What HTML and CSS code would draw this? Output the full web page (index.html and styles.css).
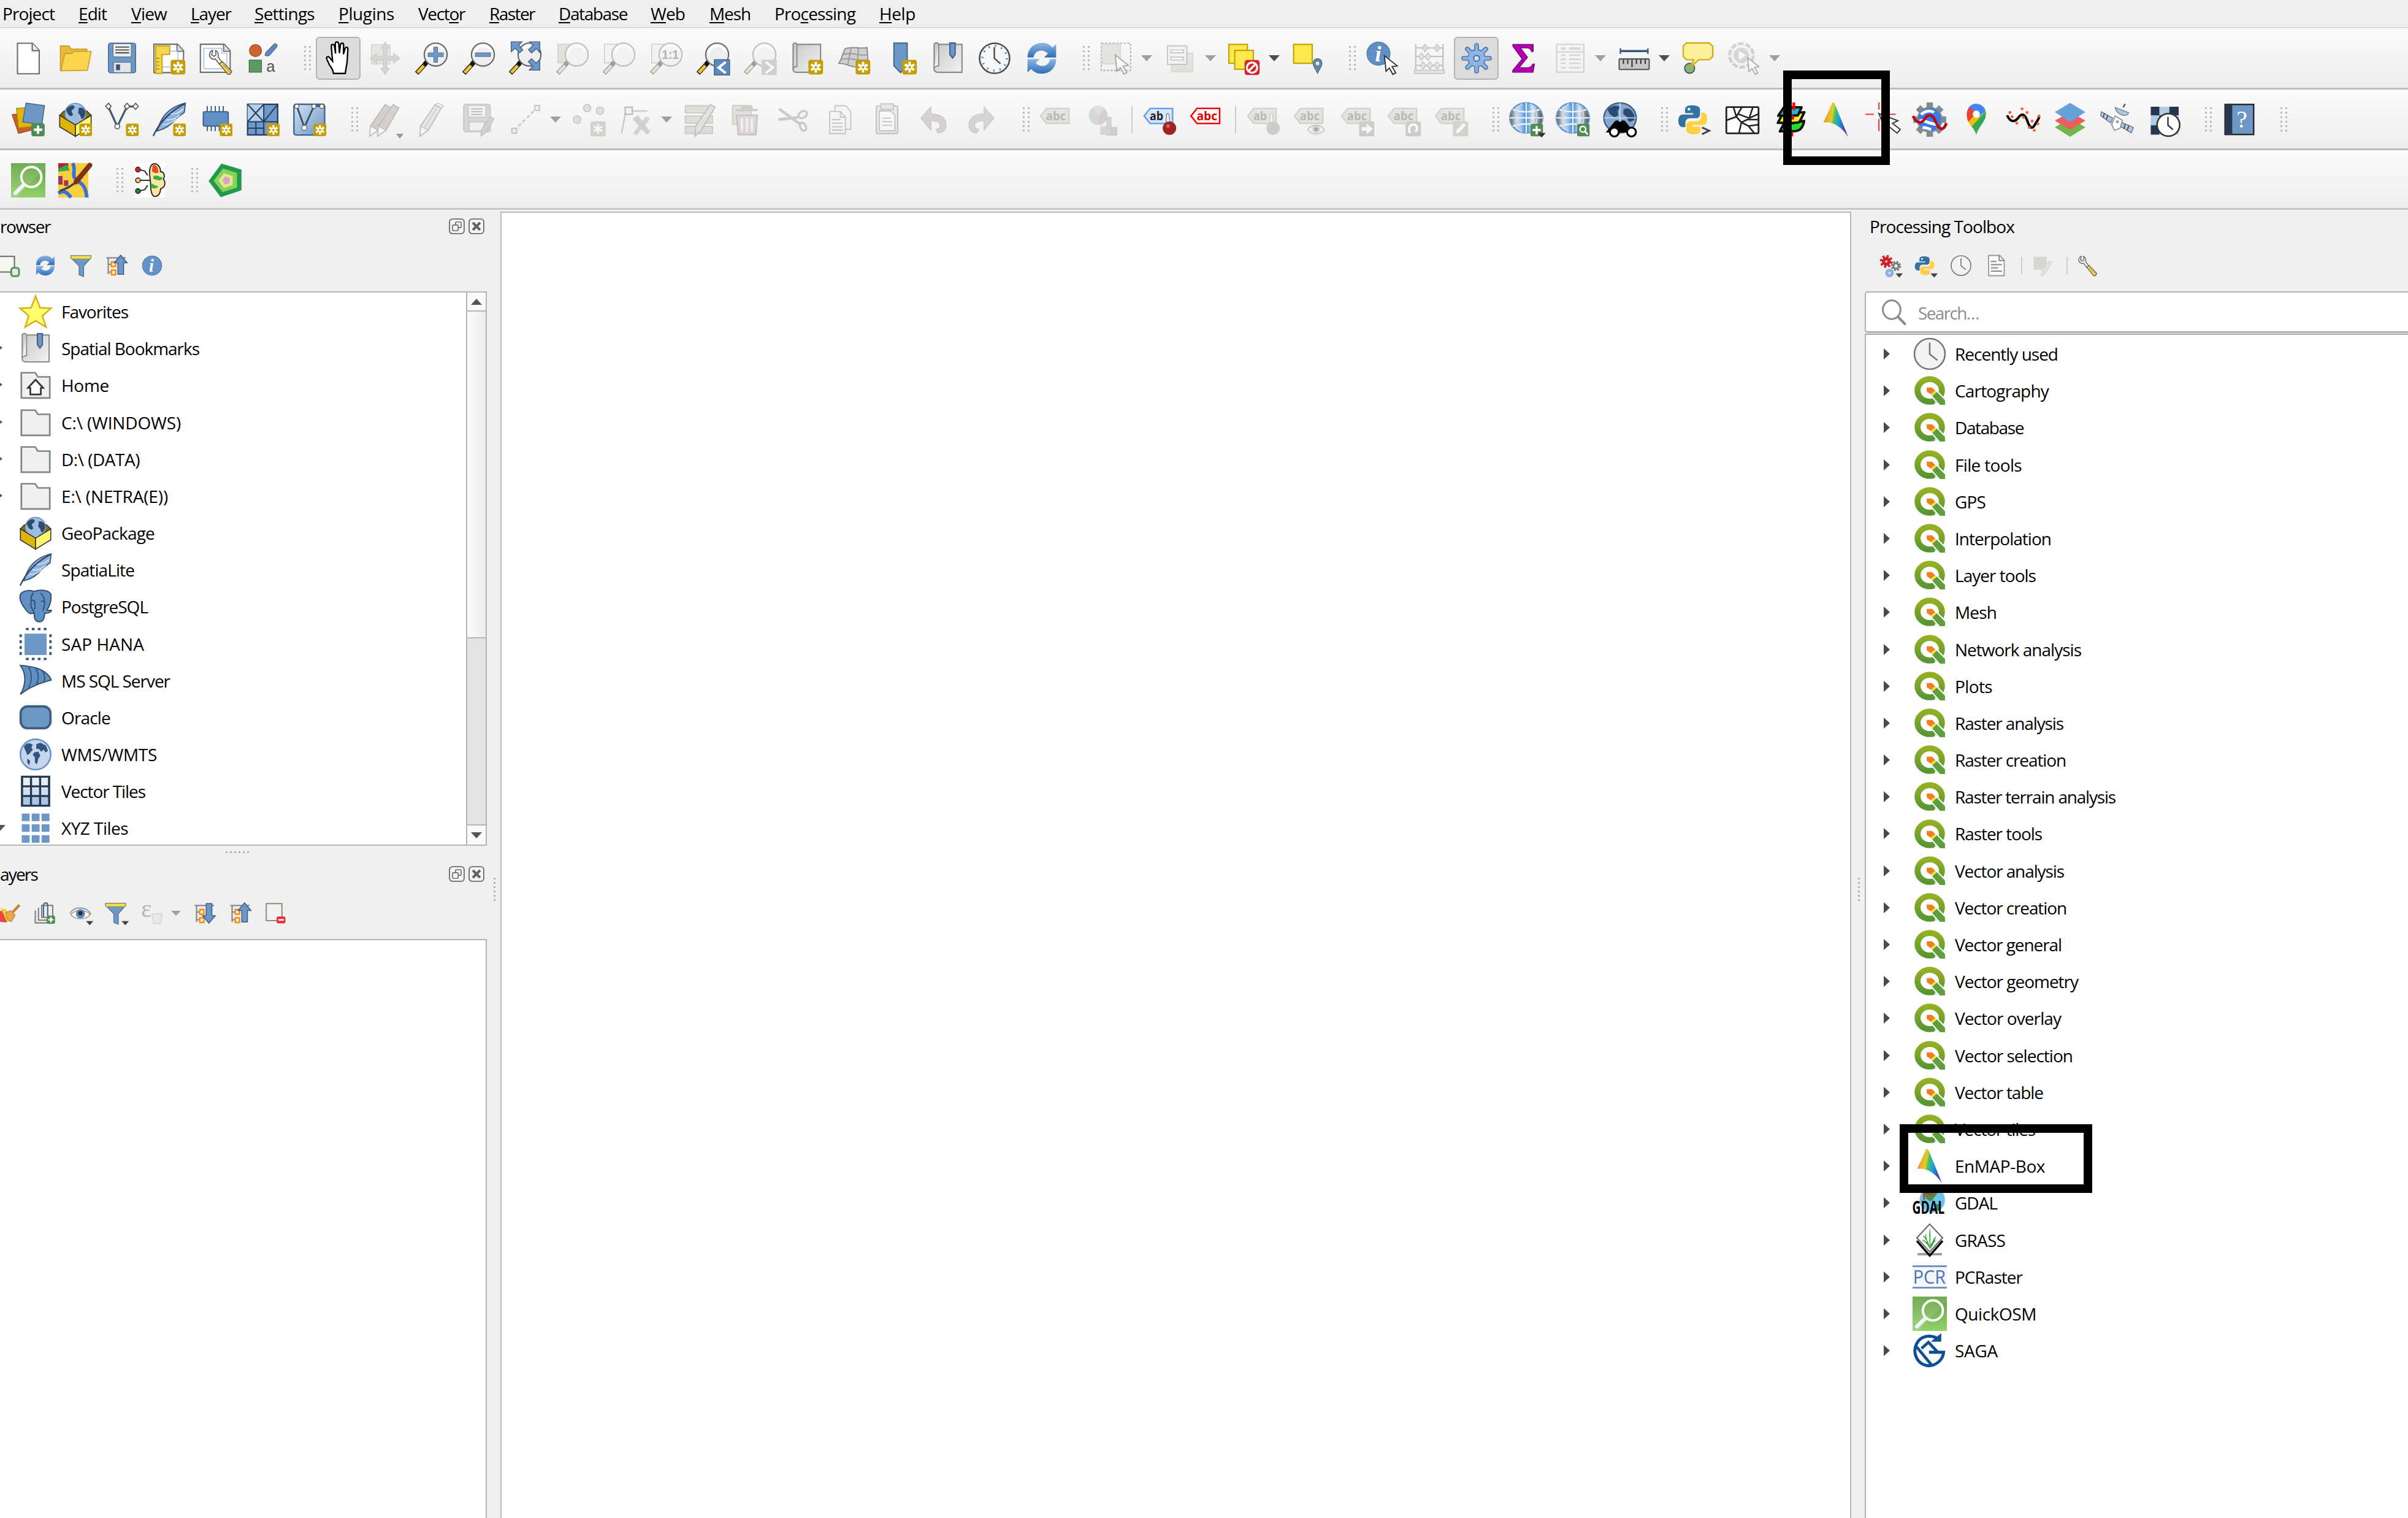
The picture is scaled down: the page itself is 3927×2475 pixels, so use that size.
FILE: index.html
```html
<!DOCTYPE html>
<html lang="en">
<head>
<meta charset="utf-8">
<title>QGIS</title>
<link rel="stylesheet" href="styles.css">
</head>
<body>
<svg class="defs" width="0" height="0" aria-hidden="true">
<defs>
<linearGradient id="gSteel" x1="0" y1="0" x2="1" y2="1"><stop offset="0" stop-color="#d5e3f2"/><stop offset="1" stop-color="#6a93c4"/></linearGradient>
<linearGradient id="gPage" x1="0" y1="0" x2="1" y2="1"><stop offset="0" stop-color="#c9c9c9"/><stop offset="1" stop-color="#f2f2f2"/></linearGradient>
<linearGradient id="gRefresh" x1="0" y1="0" x2="0" y2="1"><stop offset="0" stop-color="#8fb8e6"/><stop offset="1" stop-color="#2f6db5"/></linearGradient>
<linearGradient id="gOsm" x1="0" y1="0" x2="0" y2="1"><stop offset="0" stop-color="#5f9f3e"/><stop offset="1" stop-color="#93d26a"/></linearGradient>
<linearGradient id="gRain" x1="0" y1="0" x2="1" y2=".25"><stop offset="0" stop-color="#ee4030"/><stop offset=".25" stop-color="#f7a823"/><stop offset=".42" stop-color="#d4d22c"/><stop offset=".52" stop-color="#52bd5c"/><stop offset=".7" stop-color="#18a5d8"/><stop offset="1" stop-color="#4a3fae"/></linearGradient>
<linearGradient id="gQ" x1="0" y1="0" x2="0" y2="1"><stop offset="0" stop-color="#93b023"/><stop offset="1" stop-color="#589632"/></linearGradient>
<linearGradient id="gGlobe" x1="0" y1="0" x2="1" y2="0"><stop offset="0" stop-color="#555"/><stop offset=".2" stop-color="#ddd"/><stop offset=".35" stop-color="#9cc4ee"/><stop offset=".5" stop-color="#3d87d0"/><stop offset=".7" stop-color="#e3e8ee"/><stop offset="1" stop-color="#444"/></linearGradient>

<symbol id="badge" viewBox="0 0 12 12"><rect x=".3" y=".3" width="11.2" height="11.2" rx="1.8" fill="#c49f04"/><path d="M6 1.8v8.2M2.4 3.9l7.1 4.1M9.5 3.9L2.4 8" stroke="#fff" stroke-width="1.8"/><circle cx="6" cy="6" r="1" fill="#c49f04"/></symbol>
<symbol id="new" viewBox="0 0 24 24"><path d="M4.500 1.500h10.500l4.700 5v16.300h-15.200z" fill="#fff" stroke="#6d6d6d" stroke-width=".9"/><path d="M14.800 1.500v5.200h4.900" fill="#eee" stroke="#6d6d6d" stroke-width=".9"/></symbol>
<symbol id="open" viewBox="0 0 24 24"><path d="M1.500 20.500V3.400h6l1.500 2.200h11v4" fill="#e9bb3a" stroke="#c79c29" stroke-width=".7"/><path d="M1.800 20.800L4.500 8.600h5l1.300-1.400h12.200l-2.600 13.200z" fill="#fcd54f" stroke="#c79c29" stroke-width=".7"/></symbol>
<symbol id="save" viewBox="0 0 24 24"><rect x="2.500" y="1.400" width="19" height="20.800" rx="1.600" fill="#6d97c4" stroke="#4d6f97" stroke-width=".7"/><rect x="5.700" y="1.800" width="12.800" height="9.300" rx=".8" fill="#ececec" stroke="#4d6f97" stroke-width=".5"/><path d="M7.300 4.200h9.700M7.300 6.200h9.700M7.300 8.200h9.700" stroke="#333" stroke-width=".7"/><rect x="6" y="14.800" width="12.400" height="7.200" fill="#e4e4e4" stroke="#4d6f97" stroke-width=".5"/><rect x="7.800" y="16.300" width="2.800" height="4" fill="#34557d"/></symbol>
<symbol id="layout" viewBox="0 0 24 24"><path d="M1.300 2.200h16.500l4.200 4.500v15.300h-20.700z" fill="#fff" stroke="#6d6d6d" stroke-width=".9"/><path d="M17.400 2.200v4.900h4.600" fill="#ddd" stroke="#6d6d6d" stroke-width=".8"/><rect x="6" y="7" width="12" height="11" fill="none" stroke="#9cb8e6" stroke-width=".6"/><path d="M2.500 3.400h9.800v6h-5.300v13.200h-4.500z" fill="#f6d44c" stroke="#c79f12" stroke-width=".8"/><path d="M3 12h2M3 14.500h2M3 17h2M3 19.500h2" stroke="#a27f00" stroke-width=".6"/><use href="#badge" x="12.700" y="12.800" width="11" height="11"/></symbol>
<symbol id="wrenchShape" viewBox="0 0 24 24"><path d="M5.500 1.800c-2.700 1-3.800 4-2.300 6.100 1.300 1.800 3.300 2 4.600 1.600l3.700 4.800 2.300-1.900-3.600-4.700c.8-2.400-.3-4.900-2.300-5.800l.4 3.900-1.800 1.300-1.900-1.300z" fill="#eee" stroke="#555" stroke-width=".8"/><path d="M11.300 13.800l2.700-2 8.300 8.700-1.500 2.400-1.900.2z" fill="#f0d26c" stroke="#6b5a25" stroke-width=".8"/><path d="M14.500 14.500l6.500 7" stroke="#b99a37" stroke-width=".7"/></symbol>
<symbol id="layoutmgr" viewBox="0 0 24 24"><path d="M1.200 2.200h16.600l4.200 4.500v15.100h-20.800z" fill="#fff" stroke="#6d6d6d" stroke-width=".9"/><path d="M17.400 2.200v4.900h4.600" fill="#ddd" stroke="#6d6d6d" stroke-width=".8"/><path d="M3.600 5h12.500v3.500h3.600v10.800H3.600z" fill="none" stroke="#9cb8f0" stroke-width=".6"/><use href="#wrenchShape" x="5.500" y="5" width="19" height="19"/></symbol>
<symbol id="style" viewBox="0 0 24 24"><circle cx="6.700" cy="6.600" r="4.200" fill="#cc6433" stroke="#a04a22" stroke-width=".6"/><path d="M13.400 10c.2-2 1-3 2.200-3.600l4.400-4.600 1.800.6-.2 1.700-4.200 4.700c-.7 1.300-2 2-4 1.200z" fill="#6188b8" stroke="#43658f" stroke-width=".5"/><rect x="2.300" y="13.300" width="8.600" height="8.400" fill="#5c9a63" stroke="#3f7646" stroke-width=".6"/><text x="14.200" y="21.600" font-family="Liberation Sans" font-size="11" fill="#555">a</text></symbol>
<symbol id="hand" viewBox="0 0 24 24"><path d="M8.900 22.600c-.2-2.200-1.400-4.200-2.700-5.800l-2-4.300c-.5-1.600 1.200-2.100 2.100-.8l2 2.300-.6-6.600-.3-3.800c0-1.800 1.900-1.700 2.200-.1l.8 5.200-.2-6.700c.1-1.900 2.200-1.800 2.400 0l.5 6.400.7-5.800c.3-1.600 2.300-1.500 2.200.2l-.1 6.400 1.100-4c.5-1.400 2.100-1.100 2 .4l-.5 8.400c-.2 3-1 5-1.300 8.600z" fill="#fff" stroke="#000" stroke-width="1"/></symbol>
<symbol id="pansel" viewBox="0 0 24 24"><rect x="2.500" y="2.500" width="13" height="13.500" fill="#d8cf9c" stroke="#a89c60" stroke-width=".6"/><path d="M12 .8l3 4.200h-1.800v5.500H18V8.600L22.600 12 18 15.400v-2H13.200V19H15l-3 4.300L9 19h1.800v-5.600H6.200v2L1.500 12l4.700-3.400v1.900h4.600V5H9z" fill="#9aa6b3" stroke="#7c8996" stroke-width=".5"/></symbol>
<symbol id="mag" viewBox="0 0 24 24"><path d="M8.200 15.200L1.500 22.500" stroke="#222" stroke-width="3.200"/><path d="M6.500 17.200L2 22" stroke="#f6c52f" stroke-width="2.100"/><path d="M7 16.200l3-3.300" stroke="#111" stroke-width="3"/><circle cx="14.800" cy="9.400" r="8" fill="#eee" stroke="#666" stroke-width=".9"/><path d="M9 9a6 6 0 0 1 11.500-2" fill="none" stroke="#fff" stroke-width="1.500"/></symbol>
<symbol id="zin" viewBox="0 0 24 24"><use href="#mag"/><path d="M14.800 4v11M9.300 9.500h11" stroke="#40699a" stroke-width="3"/><path d="M14.800 4.400v10.200M9.700 9.500h10.200" stroke="#6d97c4" stroke-width="2.200"/></symbol>
<symbol id="zout" viewBox="0 0 24 24"><use href="#mag"/><path d="M9.300 9.500h11" stroke="#40699a" stroke-width="3"/><path d="M9.700 9.500h10.200" stroke="#6d97c4" stroke-width="2.200"/></symbol>
<symbol id="zfull" viewBox="0 0 24 24"><use href="#mag"/><g fill="#6d97c4" stroke="#40628e" stroke-width=".6"><path d="M2 .5h7.500L7.200 3l3 3.200-2.200 2L4.700 5 2 7.500z"/><path d="M22 .5v7.500L19.500 5.300l-3.200 3-2.200-2.200L17.300 3 14.800.5z"/><path d="M22 20.300v-7.500l-2.600 2.600-3.200-3.100-2.200 2.200 3.200 3.200-2.600 2.600z"/></g></symbol>
<symbol id="zsel" viewBox="0 0 24 24"><rect x="1.600" y="2.200" width="11" height="13" fill="#c9c08c" stroke="#999065" stroke-width=".6"/><use href="#mag"/></symbol>
<symbol id="zlay" viewBox="0 0 24 24"><rect x="1.600" y="2.200" width="11" height="13" fill="#eee" stroke="#888" stroke-width=".6"/><use href="#mag"/></symbol>
<symbol id="z11" viewBox="0 0 24 24"><rect x="1.600" y="2.200" width="11" height="13" fill="#eee" stroke="#888" stroke-width=".6"/><use href="#mag"/><text x="8.700" y="12.600" font-family="Liberation Sans" font-weight="bold" font-size="8.500" textLength="12" fill="#444">1:1</text></symbol>
<symbol id="zlast" viewBox="0 0 24 24"><use href="#mag"/><rect x="12.800" y="13" width="10.700" height="10.700" fill="#5d89bb" stroke="#3d618f" stroke-width=".6"/><path d="M20.800 14.600l-4.900 3.900 4.900 3.900" fill="none" stroke="#fff" stroke-width="1.700"/></symbol>
<symbol id="znext" viewBox="0 0 24 24"><use href="#mag"/><rect x="12.800" y="13" width="10.700" height="10.700" fill="#8f9aa6"/><path d="M15.800 14.600l4.900 3.900-4.900 3.900" fill="none" stroke="#fff" stroke-width="1.700"/></symbol>
<symbol id="mapnew" viewBox="0 0 24 24"><path d="M5 2.300h16.500v19.500H4.500c-1.500 0-2.200-1-2.200-2.500V2.500c0-1.500 2.700-1.500 2.700 0z" fill="url(#gPage)" stroke="#8a8a8a" stroke-width=".9"/><path d="M5 2.300v15.500c-1.300-.2-2.700.7-2.700 1.800" fill="none" stroke="#8a8a8a" stroke-width=".8"/><use href="#badge" x="12.700" y="12.800" width="11" height="11"/></symbol>
<symbol id="map3d" viewBox="0 0 24 24"><path d="M5.500 5.500c5-2.500 10 .5 15.500-1l.8 13-8.500.5c-4 0-7-2.500-12-2.500 2-3 2.500-6.500 4.200-10z" fill="#d0d0d0" stroke="#8a8a8a" stroke-width=".8"/><path d="M10 4.400L7.500 16.200M15 5l-1 13M3.800 9.500c7-2.500 11 1.500 17.500 0M2.700 13c7-2.300 12 1.600 19.300 0" fill="none" stroke="#999" stroke-width=".8"/><use href="#badge" x="12.700" y="12.800" width="11" height="11"/></symbol>
<symbol id="bmnew" viewBox="0 0 24 24"><path d="M7.200 1.400h9.300v15.900l-4.700 4.700-4.600-4.700z" fill="#6d97c4" stroke="#3d618f" stroke-width=".8"/><use href="#badge" x="12.700" y="12.800" width="11" height="11"/></symbol>
<symbol id="book" viewBox="0 0 24 24"><path d="M5.500 2.300h16.300v19.500H5c-1.800 0-2.700-1-2.700-2.500V2.500c0-1.700 3.200-1.700 3.200 0z" fill="url(#gPage)" stroke="#8a8a8a" stroke-width=".9"/><path d="M5.500 2.300v15c-1.500 0-3.200.7-3.200 1.800" fill="#eee" stroke="#8a8a8a" stroke-width=".8"/><path d="M13.300 1.300h3.700v8l-1.800 2.600-1.900-2.600z" fill="#6d97c4" stroke="#3a5b86" stroke-width=".8"/></symbol>
<symbol id="clock" viewBox="0 0 24 24"><circle cx="12" cy="12" r="10.500" fill="#f6f7f8" stroke="#4d4d4d" stroke-width="1.100"/><circle cx="12" cy="12" r="8.600" fill="none" stroke="#4e7fbd" stroke-width="1.500" stroke-dasharray=".9 3.600"/><path d="M11.800 4.300V12l4.300 3.800" fill="none" stroke="#555" stroke-width="1.100"/></symbol>
<symbol id="clock2" viewBox="0 0 24 24"><circle cx="12" cy="12" r="10.700" fill="#f1f4f3" stroke="#777" stroke-width="1.100"/><path d="M12 4.200v8l5.300 4.200" fill="none" stroke="#777" stroke-width="1.100"/></symbol>
<symbol id="refresh" viewBox="0 0 24 24"><path d="M2 11.500C2 4 8 .8 13 1.300c3 .2 5 1.600 6.500 3.200L22 2v9.500h-8.500l2.800-2.800C13 5.200 7 6 6.200 11.500z" fill="url(#gRefresh)"/><path d="M22 12.500c0 7.500-6 10.700-11 10.200-3-.2-5-1.600-6.500-3.200L2 22v-9.500h8.500l-2.800 2.800c3.300 3.500 9.300 2.700 10.100-2.800z" fill="url(#gRefresh)"/></symbol>
<symbol id="cursor" viewBox="0 0 12 16"><path d="M.7.700l1.200 12 2.600-2.500 2.700 4.900 2.200-1.300-2.800-4.700 3.900-.6z" fill="#fff" stroke="#333" stroke-width=".9"/></symbol>
<symbol id="selrect" viewBox="0 0 24 24"><rect x="1.300" y="1.500" width="20.500" height="19" fill="none" stroke="#555" stroke-width=".9" stroke-dasharray="1.600 1"/><rect x="1.700" y="2" width="13" height="14" fill="#cfc8a4" stroke="#aaa27a" stroke-width=".6"/><use href="#cursor" x="9.500" y="9" width="13" height="15"/></symbol>
<symbol id="selform" viewBox="0 0 24 24"><rect x="5.800" y="8.500" width="15" height="13" fill="#cfc8a4" stroke="#aaa27a" stroke-width=".6"/><rect x="3" y="3.300" width="13.500" height="13" fill="#eee" stroke="#777" stroke-width=".8"/><path d="M5.300 6.200h8.800v2H5.300zM5.300 11.200h8.800v2H5.300z" fill="#fff" stroke="#777" stroke-width=".7"/></symbol>
<symbol id="desel" viewBox="0 0 24 24"><rect x="1.300" y="2.300" width="13" height="13.200" fill="#fce94f" stroke="#c4a000" stroke-width=".9"/><rect x="5.400" y="6.500" width="13" height="13.200" fill="#fce94f" stroke="#c4a000" stroke-width=".9"/><rect x="12.300" y="13.200" width="10.500" height="10.500" rx="1.800" fill="#d7232b"/><circle cx="17.500" cy="18.500" r="3.600" fill="none" stroke="#fff" stroke-width="1.400"/><path d="M15 21l5-5" stroke="#fff" stroke-width="1.400"/></symbol>
<symbol id="selloc" viewBox="0 0 24 24"><rect x="2" y="2.300" width="13" height="13.200" fill="#fce94f" stroke="#c4a000" stroke-width=".9"/><path d="M18.700 12.300a3.100 3.100 0 0 1 3.100 3.300c0 2.200-1.900 4-3.100 7-1.200-3-3.100-4.800-3.100-7a3.100 3.100 0 0 1 3.100-3.300z" fill="#6189a0" stroke="#45677b" stroke-width=".5"/><circle cx="18.700" cy="15.600" r="1.200" fill="#eef"/></symbol>
<symbol id="ident" viewBox="0 0 24 24"><circle cx="9" cy="8.800" r="8.100" fill="#5f8fc5" stroke="#4a74a5" stroke-width=".5"/><text x="6.600" y="14.300" font-family="Liberation Serif" font-style="italic" font-weight="bold" font-size="15.500" fill="#fff">i</text><use href="#cursor" x="11.500" y="9.600" width="13" height="14.500"/></symbol>
<symbol id="abacus" viewBox="0 0 24 24"><path d="M2.500 2v20M21.500 2v20M2.500 4.800h19M2.500 10.800h19M2.500 17h19" fill="none" stroke="#777" stroke-width="1"/><path d="M1.500 20.300h21v2.300h-21z" fill="#ccc" stroke="#777" stroke-width=".6"/><g stroke="#777" stroke-width=".6"><path d="M9 2.200l2 2.600-2 2.600-2-2.600zM17.400 2.200l2 2.600-2 2.600-2-2.600z" fill="#d8a8a0"/><path d="M6.500 8.200l2 2.600-2 2.600-2-2.600zM11 8.200l2 2.600-2 2.600-2-2.600z" fill="#b6d0a8"/><path d="M7.600 14.400l2 2.600-2 2.600-2-2.600zM12.500 14.400l2 2.600-2 2.600-2-2.600zM17.400 14.400l2 2.600-2 2.600-2-2.600z" fill="#ccd"/></g></symbol>
<symbol id="gear" viewBox="0 0 24 24"><g stroke="#4b76ac" stroke-width="3.300" stroke-linecap="round"><path d="M12 3v18M3 12h18M5.600 5.600l12.800 12.800M18.400 5.600L5.600 18.400"/></g><circle cx="12" cy="12" r="6.400" fill="#4b76ac"/><g stroke="#8fb3e2" stroke-width="1.900" stroke-linecap="round"><path d="M12 3v18M3 12h18M5.600 5.600l12.800 12.800M18.400 5.600L5.600 18.400"/></g><circle cx="12" cy="12" r="5.700" fill="#8fb3e2"/><circle cx="12" cy="12" r="2" fill="#dfe4ea" stroke="#4b76ac" stroke-width=".9"/></symbol>
<symbol id="sigma" viewBox="0 0 24 24"><path d="M4.800 2.300H19v5h-1.200c-.4-2-1.400-2.600-3.300-2.600H10l5 6.700-5.800 7.200h6c2.200 0 3-1 3.500-2.600h1.200l-1 5.800H4.700v-1.200l6.600-8.100-6.500-9z" fill="#b000b0" stroke="#7d007d" stroke-width=".6"/></symbol>
<symbol id="table" viewBox="0 0 24 24"><rect x="2.400" y="2.300" width="19" height="19.400" fill="#f3f5f6" stroke="#8f9ba5" stroke-width=".9"/><path d="M2.400 7.600h19" stroke="#8f9ba5" stroke-width=".8"/><path d="M5.200 5.200h3.500M11 5.200h8" stroke="#9aa8b4" stroke-width="1.900"/><path d="M5.200 9.800h3.500M11 9.800h8M5.200 12.700h3.500M11 12.700h8M5.200 15.500h3.500M11 15.500h8M5.200 18.500h3.500M11 18.500h8" stroke="#9aa8b4" stroke-width="1.100"/></symbol>
<symbol id="ruler" viewBox="0 0 24 24"><path d="M2.400 7h19.200" stroke="#38587f" stroke-width="1.500"/><path d="M2.400 5v4M21.600 5v4" stroke="#38587f" stroke-width="1"/><rect x="1.500" y="12.500" width="21" height="7.300" rx=".5" fill="#c8c8c8" stroke="#555" stroke-width=".9"/><path d="M4.500 13v3M7.500 13v3M10.500 13v5.200M13.600 13v3M16.700 13v3M19.700 13v3" stroke="#333" stroke-width=".9"/></symbol>
<symbol id="tip" viewBox="0 0 24 24"><circle cx="6.200" cy="19" r="3.500" fill="#84b388" stroke="#3c5f40" stroke-width=".8"/><path d="M4 1.300h16l2.400 2.300v7L20 13h-7.500l-6 5.800 2.600-5.800H4l-2.300-2.400v-7z" fill="#faf09a" stroke="#d0ab1c" stroke-width="1"/></symbol>
<symbol id="action" viewBox="0 0 24 24"><circle cx="9.800" cy="10" r="8.300" fill="#eee" stroke="#999" stroke-width="2" stroke-dasharray="4 1.200"/><circle cx="9.800" cy="10" r="5.400" fill="#9fa8b0"/><path d="M8 6.800l5.200 3.200L8 13.200z" fill="#fff"/><use href="#cursor" x="12.500" y="11" width="12" height="13"/></symbol>

<symbol id="dsm" viewBox="0 0 24 24"><path d="M.8 8.600l13-1.500 1.500 12-10 2.500z" fill="#cd5f2c" stroke="#a34619" stroke-width=".6"/><path d="M3.800 4.200l14-1 .4 13.300-13 1.400z" fill="#e2b50c" stroke="#ad8500" stroke-width=".6"/><path d="M10.500.5L23.400 2.200 21.500 15.800 8.200 13.500z" fill="#6d97c4" stroke="#466c99" stroke-width=".7"/><rect x="14.200" y="14.500" width="9.300" height="9.200" rx="1.700" fill="#4f8b54"/><path d="M18.850 16.200v5.800M16 19.100h5.800" stroke="#fff" stroke-width="1.700"/></symbol>
<symbol id="gpkg" viewBox="0 0 24 24"><path d="M1 9l3-3h16l3 3-11 5.800z" fill="#8a6f06" stroke="#333" stroke-width=".6"/><circle cx="12" cy="8" r="7.400" fill="#9cbce0" stroke="#5f86b4" stroke-width=".6"/><path d="M5.500 5c2-3 5-3.500 5.500-2.500s1 1-1 2.500 1 2.500 0 4-3.500 0-4.500-4zM14 4c2-1 4 0 4.700 2s-.4 5-1.700 5.500-1-2.500-2.500-3.500.5-2.500-.5-4z" fill="#2e4a70"/><path d="M1 9l11 6.700v8L1 17z" fill="#dfb409" stroke="#333" stroke-width=".7"/><path d="M23 9l-11 6.700v8L23 17z" fill="#fdf76b" stroke="#333" stroke-width=".7"/></symbol>
<symbol id="gpkgnew" viewBox="0 0 24 24"><use href="#gpkg"/><use href="#badge" x="14.500" y="14.500" width="9.500" height="9.500"/></symbol>
<symbol id="shp" viewBox="0 0 24 24"><path d="M2.500 3.200L8.700 16.800 15.500 2.800h6" fill="none" stroke="#3e5a7a" stroke-width="1.400"/><g fill="#fff" stroke="#555" stroke-width=".7"><path d="M2.500.6l1.900 2.100-1.900 2.100L.6 2.700zM15.500.6l1.900 2.100-1.900 2.100-1.900-2.100zM21.500.6l1.900 2.100-1.900 2.100-1.900-2.100z"/><circle cx="8.700" cy="16.800" r="1.700"/></g></symbol>
<symbol id="shpnew" viewBox="0 0 24 24"><use href="#shp"/><use href="#badge" x="14.500" y="14.500" width="9.500" height="9.500"/></symbol>
<symbol id="feather" viewBox="0 0 24 24"><path d="M23.300.5C17 2 12 4.500 8 10c-2.500 3.500-3.300 6.500-4.500 10 4-1 9.500-3.500 13-8.500l6-4.500z" fill="#8fb2dc" stroke="#38587f" stroke-width=".8"/><path d="M23 .8C14 5.500 6 12 .8 23.500" fill="none" stroke="#2c4766" stroke-width="1"/><path d="M7.500 15.500c4 0 7-1.500 9-4M9.500 12.200c4 .3 7-.7 10-3.500M13 8c4 .2 6-1 9-3.500" fill="none" stroke="#dbe8f6" stroke-width=".7"/></symbol>
<symbol id="feathernew" viewBox="0 0 24 24"><use href="#feather"/><use href="#badge" x="14.500" y="14.500" width="9.500" height="9.500"/></symbol>
<symbol id="chip" viewBox="0 0 24 24"><path d="M6 2.500v17.500M8.800 2.500v17.500M11.600 2.500v17.500M14.400 2.500v17.500M17.200 2.500v17.500" stroke="#38587f" stroke-width=".8"/><rect x="3.200" y="6.500" width="17.500" height="10" rx="1" fill="#5f8fc5" stroke="#3b5f8c" stroke-width=".8"/><use href="#badge" x="14.500" y="14.500" width="9.500" height="9.500"/></symbol>
<symbol id="meshnew" viewBox="0 0 24 24"><rect x="1.200" y="1.300" width="21" height="21.400" fill="#6f99cc" stroke="#26405f" stroke-width="1"/><path d="M1.200 1.300h11v12h-11z" fill="#b5cde9"/><path d="M1.200 13.500h21M12.500 1.300v21.400M1.200 1.300l11.300 12.200M12.500 1.300L1.200 13.500M22.200 1.300l-9.700 12.200M7 13.500v9.200M1.200 18h11.300" stroke="#26405f" stroke-width=".9"/><use href="#badge" x="14.500" y="14.500" width="9.500" height="9.500"/></symbol>
<symbol id="vecnew" viewBox="0 0 24 24"><rect x="1" y="1.300" width="21.500" height="21.500" rx="1.500" fill="url(#gSteel)" stroke="#3f6590" stroke-width="1"/><path d="M3 2.500L8.300 17.500 15 2.500h5" fill="none" stroke="#33506f" stroke-width="1.200"/><circle cx="3" cy="2.700" r="1.500" fill="#fff" stroke="#555" stroke-width=".5"/><circle cx="15" cy="2.700" r="1.500" fill="#fff" stroke="#555" stroke-width=".5"/><circle cx="20.500" cy="2.700" r="1.500" fill="#fff" stroke="#555" stroke-width=".5"/><circle cx="8.300" cy="17.700" r="1.800" fill="#fff" stroke="#555" stroke-width=".5"/><use href="#badge" x="14.500" y="14.500" width="9.500" height="9.500"/></symbol>
<symbol id="pen" viewBox="0 0 24 24"><path d="M4.300 16.500L14.500 1.500l4.200 2.300L9.500 19.500 3.800 23.500z" fill="#d9d2b0" stroke="#666" stroke-width=".8"/><path d="M4.300 16.500l5.200 3-5.700 4zM14.500 1.500l2-1 3.700 2-1.500 1.300z" fill="#fff" stroke="#666" stroke-width=".6"/><path d="M7 17.500L16.500 2.700" stroke="#888" stroke-width=".6"/></symbol>
<symbol id="pens" viewBox="0 0 24 24"><g transform="translate(-2.500 0)"><path d="M4.300 16.500L14.500 1.500l4.200 2.300L9.500 19.500 3.800 23.500z" fill="#b09080" stroke="#666" stroke-width=".8"/><path d="M4.300 16.500l5.200 3-5.700 4z" fill="#fff" stroke="#666" stroke-width=".6"/></g><g transform="translate(3 0)"><path d="M4.300 16.500L14.500 1.500l4.200 2.300L9.500 19.500 3.800 23.500z" fill="#c09080" stroke="#666" stroke-width=".8"/><path d="M4.300 16.500l5.200 3-5.700 4z" fill="#fff" stroke="#666" stroke-width=".6"/></g></symbol>
<symbol id="saveedit" viewBox="0 0 24 24"><g fill="#eee" stroke="#888" stroke-width="1"><rect x="1.400" y="1.400" width="18.500" height="19" rx="1.500" fill="#aaa"/><rect x="4.500" y="2" width="12.500" height="8.500"/><rect x="5" y="13.500" width="11" height="6.500"/></g><path d="M6.500 4.500h8M6.500 6.500h8M6.500 8.400h8" stroke="#555" stroke-width=".8"/><g transform="translate(11 9) scale(.62)"><path d="M4.300 16.500L14.500 1.500l4.200 2.300L9.500 19.500 3.800 23.500z" fill="#c09080" stroke="#666" stroke-width=".8"/></g></symbol>
<symbol id="digline" viewBox="0 0 24 24"><path d="M4 19.500L20 4" stroke="#888" stroke-width="1.300" stroke-dasharray="2.500 1.700"/><rect x="2.500" y="18.200" width="3.300" height="3.300" fill="#eee" stroke="#777" stroke-width=".9"/><rect x="18.500" y="2.200" width="3.300" height="3.300" fill="#eee" stroke="#777" stroke-width=".9"/></symbol>
<symbol id="points" viewBox="0 0 24 24"><g fill="#bbb" stroke="#888" stroke-width=".8"><circle cx="10.500" cy="4" r="2.600"/><circle cx="19.500" cy="5.800" r="2.600"/><circle cx="3.500" cy="12" r="2.600"/></g><rect x="12.800" y="13.200" width="10.700" height="10.500" rx="1.500" fill="#a89d6c"/><path d="M18.100 15v7M15 16.700l6.200 3.500M21.200 16.700L15 20.200" stroke="#fff" stroke-width="1.300"/></symbol>
<symbol id="vertex" viewBox="0 0 24 24"><path d="M5 6L2 21.500M5 6h15" stroke="#888" stroke-width="1.100"/><rect x="4.500" y="3.300" width="5" height="5" fill="#eee" stroke="#555" stroke-width=".9"/><path d="M10 21.500L19 9.500l3 2L12.500 23z" fill="#ada47d"/><path d="M9.500 11.500l4-2.500 8.500 11.500-2.500 2z" fill="#999"/></symbol>
<symbol id="attrs" viewBox="0 0 24 24"><g fill="#c4bb8c" stroke="#8d855b" stroke-width=".8"><rect x="2" y="2.300" width="19" height="5"/><rect x="2" y="9.500" width="19" height="5"/><rect x="2" y="16.700" width="19" height="5"/></g><g transform="translate(5 0)"><path d="M4.300 16.500L14.500 1.500l3.200 1.800L8 19.500 3.800 23.500z" fill="#d6bfb5" stroke="#666" stroke-width=".8"/></g></symbol>
<symbol id="trash" viewBox="0 0 24 24"><rect x="2" y="2.200" width="13" height="13" fill="#c9c294" stroke="#8d855b" stroke-width=".8"/><path d="M4 5.300h15.500M8 3.500h8" stroke="#b37a7a" stroke-width="1.600"/><path d="M4.700 9h14.600l-1 13.500H6z" fill="#d6a2a2" stroke="#a56b6b" stroke-width="1"/><path d="M8.500 11v9.500M12 11v9.500M15.500 11v9.500" stroke="#eee" stroke-width="1.500"/></symbol>
<symbol id="cut" viewBox="0 0 24 24"><path d="M2 4.500l15 11M1.500 12l13.500-1.500" stroke="#888" stroke-width="2"/><ellipse cx="18.500" cy="8.500" rx="3.200" ry="2.200" transform="rotate(-30 18.500 8.500)" fill="none" stroke="#a87878" stroke-width="1.500"/><ellipse cx="18.700" cy="17" rx="3" ry="2" transform="rotate(65 18.700 17)" fill="none" stroke="#a87878" stroke-width="1.500"/></symbol>
<symbol id="copy" viewBox="0 0 24 24"><g fill="#f4f4f4" stroke="#888" stroke-width=".9"><path d="M8 2.300h7.500l3.500 4v12.500H8z"/><path d="M4.300 6.300h7.500l3.500 4v11.500h-11z"/></g><path d="M6 12h6M6 14.500h7.500M6 17h7.500M6 19.300h7.500M11.800 6.300v4h3.500" fill="none" stroke="#777" stroke-width=".8"/></symbol>
<symbol id="paste" viewBox="0 0 24 24"><rect x="4.300" y="2.500" width="15" height="19.300" rx=".8" fill="#d8d3bb" stroke="#777" stroke-width=".9"/><rect x="7.500" y="1" width="8.800" height="4" fill="#ccc" stroke="#777" stroke-width=".8"/><path d="M6.500 6h8l2.800 3v10.800H6.500z" fill="#fff" stroke="#777" stroke-width=".8"/><path d="M8.500 11h6M8.500 13.500h7M8.500 16h7" stroke="#777" stroke-width=".8"/></symbol>
<symbol id="undo" viewBox="0 0 24 24"><path d="M2.500 11L9.500 3v5c7 0 10.500 3 10.500 7.500 0 3.500-2 5.500-5.500 5.800l-1.500-2.500c2.500 0 3-1.500 3-3-.2-2-2-3-6.500-3v6.500z" fill="#b09890" stroke="#957c74" stroke-width=".6"/></symbol>
<symbol id="redo" viewBox="0 0 24 24"><path d="M21 11L14 3v5C7 8 3.500 11 3.500 15.500c0 3.500 2 5.500 5.500 5.800l1.500-2.500c-2.500 0-3-1.500-3-3 .2-2 2-3 6.500-3v6.500z" fill="#9ca59c" stroke="#848f84" stroke-width=".6"/></symbol>
<symbol id="tag" viewBox="0 0 24 24"><path d="M.8 9.500L5 4.200h15.700v10.500H5z" fill="#cfc9a3" stroke="#99926b" stroke-width=".9"/><text x="4.600" y="12.300" font-family="Open Sans" font-weight="bold" font-size="8" textLength="14" lengthAdjust="spacingAndGlyphs" fill="#555">abc</text></symbol>
<symbol id="chart" viewBox="0 0 24 24"><circle cx="8.500" cy="9" r="6.600" fill="#8fb09c"/><path d="M8.500 9L4 4a6.600 6.600 0 0 1 9 0z" fill="#c4bb8c"/><path d="M8.500 9L13 4.200a6.600 6.600 0 0 1-4 11.400z" fill="#b98e8e"/><rect x="10" y="16.500" width="4" height="6.300" fill="#b8ab8b"/><rect x="14.500" y="10.500" width="3" height="12.300" fill="#8fb09c" stroke="#777" stroke-width=".5"/><rect x="18" y="17.500" width="3.500" height="5.300" fill="#b98e8e" stroke="#777" stroke-width=".5"/></symbol>
<symbol id="tagpin" viewBox="0 0 24 24"><path d="M.8 9.500L5 4.200h15.700v10.500H5z" fill="#d6e8fd" stroke="#5a9ced" stroke-width="1"/><text x="4.700" y="12.300" font-family="Open Sans" font-weight="bold" font-size="8.500" textLength="9.500" lengthAdjust="spacingAndGlyphs" fill="#222">ab</text><path d="M16.500 8.500c0-1 1.700-1 1.700 0l.6 6h-2.700z" fill="#f4f4f4" stroke="#777" stroke-width=".5"/><circle cx="18.500" cy="18" r="4.700" fill="#a32222"/><circle cx="17.500" cy="16.500" r="1.300" fill="#c86464"/></symbol>
<symbol id="tagpinoff" viewBox="0 0 24 24"><path d="M.8 9.500L5 4.200h15.700v10.500H5z" fill="#cfc9a3" stroke="#99926b" stroke-width=".9"/><text x="4.700" y="12.300" font-family="Open Sans" font-weight="bold" font-size="8.500" textLength="9.500" lengthAdjust="spacingAndGlyphs" fill="#555">ab</text><path d="M16.500 8.500c0-1 1.700-1 1.700 0l.6 6h-2.700z" fill="#f4f4f4" stroke="#777" stroke-width=".5"/><circle cx="18.500" cy="18" r="4.700" fill="#a88a8a"/></symbol>
<symbol id="tagred" viewBox="0 0 24 24"><path d="M1 9.500L5.200 4.200h15.800v10.500H5.200z" fill="#fff" stroke="#f00" stroke-width="1.100"/><text x="4.900" y="12.600" font-family="Open Sans" font-weight="bold" font-size="8.500" textLength="14.500" lengthAdjust="spacingAndGlyphs" fill="#d80000">abc</text></symbol>
<symbol id="eye" viewBox="0 0 24 24"><path d="M2 12c5-7 15-7 20 0-5 7-15 7-20 0z" fill="#f4f4f4" stroke="#777" stroke-width="1.200"/><circle cx="12" cy="11.500" r="4.500" fill="#7b9cc0"/><circle cx="12" cy="11.500" r="2" fill="#222"/></symbol>
<symbol id="tageye" viewBox="0 0 24 24"><use href="#tag"/><use href="#eye" x="8" y="12" width="16" height="14"/></symbol>
<symbol id="tagmove" viewBox="0 0 24 24"><use href="#tag"/><rect x="13" y="13.200" width="10.700" height="10.500" rx="1.500" fill="#8a8f94"/><path d="M14.800 17.200h3.500v-2.500l4.300 3.800-4.300 3.800v-2.500h-3.500z" fill="#fff"/></symbol>
<symbol id="tagrot" viewBox="0 0 24 24"><use href="#tag"/><rect x="13" y="13.200" width="10.700" height="10.500" rx="1.500" fill="#8a8f94"/><path d="M16 21.500c-1.500-4 0-6 2.500-6s3.500 3 1.200 5" fill="none" stroke="#fff" stroke-width="1.700"/></symbol>
<symbol id="tagedit" viewBox="0 0 24 24"><use href="#tag"/><rect x="13" y="13.200" width="10.700" height="10.500" rx="1.500" fill="#aaa178"/><path d="M15 21.800l1-3 4.500-4.300 1.500 1.500-4.500 5z" fill="#fff"/></symbol>
<symbol id="globe" viewBox="0 0 24 24"><ellipse cx="12" cy="10.800" rx="11.500" ry="10.500" fill="url(#gGlobe)" stroke="#5c95d4" stroke-width="1"/><path d="M12 .3v21M.5 10.800h23M2.500 5c6 2 13 2 19 0M2.500 16.600c6-2 13-2 19 0" fill="none" stroke="#e8f2fc" stroke-width="1"/><path d="M9 .8C3 6 3 15 9 20.800M15 .8c6 5.200 6 14.200 0 20" fill="none" stroke="#bcd8f4" stroke-width="1"/></symbol>
<symbol id="globeadd" viewBox="0 0 24 24"><use href="#globe"/><rect x="15" y="15" width="8.700" height="8.700" rx="1" fill="#4f8b54"/><path d="M19.300 16.500v5.800M16.400 19.300h5.800" stroke="#fff" stroke-width="1.500"/><path d="M20 21.300h5.600l-2.800 3.200z" fill="#333"/></symbol>
<symbol id="globesearch" viewBox="0 0 24 24"><use href="#globe"/><rect x="15" y="15" width="8.700" height="8.700" rx="1" fill="#4f8b54"/><circle cx="19" cy="18.700" r="2" fill="none" stroke="#fff" stroke-width="1"/><path d="M20.400 20.200l2 2.200" stroke="#fff" stroke-width="1.200"/></symbol>
<symbol id="globebin" viewBox="0 0 24 24"><ellipse cx="12" cy="10.800" rx="11.300" ry="10.400" fill="#87a8d0" stroke="#3c5c86" stroke-width="1"/><path d="M3.500 5c3-3.500 7-3 8-2s-2 2.500-1 4.500-2 3-3 2.500-3.500-2-4-5zM14.500 5c2-1.500 5-1 7 3s-.5 5-2.500 5.500-1-3-3-4-2-2.500-1.500-4.500z" fill="#2c4a72"/><path d="M.8 10.800h22.400M12 .4v14" stroke="#cfe0f4" stroke-width=".7"/><path d="M8.500 13c1-.8 2.500-.5 3 .5h1c.5-1 2-1.300 3-.5l6.500 8H2z" fill="#000"/><circle cx="8" cy="20.700" r="3.100" fill="#fff" stroke="#000" stroke-width="1.300"/><circle cx="20" cy="20.700" r="3.100" fill="#fff" stroke="#000" stroke-width="1.300"/></symbol>
<symbol id="py" viewBox="0 0 24 24"><path d="M11.500 2c-4 0-5 1.300-5 3.200V7.500h6v1H4.700C2.300 8.500 1.500 11 1.500 13s1 4.300 3 4.300h2.200v-3c0-2 1.500-3.300 3.500-3.300h4.600c1.800 0 2.700-1.400 2.700-2.900V5c0-2-2-3-6-3z" fill="#36729f"/><path d="M12.800 22.300c4 0 5-1.300 5-3.200v-2.300h-6v-1h7.900c2.300 0 3.100-2.500 3.100-4.500s-1-4.200-3-4.200h-1.500v2.800c0 2-1.500 3.300-3.500 3.300H10c-1.800 0-2.700 1.400-2.700 2.900v3.200c0 2 2 3 5.500 3z" fill="#fed142"/><circle cx="9.300" cy="4.700" r="1" fill="#fff"/></symbol>
<symbol id="pycon" viewBox="0 0 24 24"><g transform="translate(-1 0) scale(.95 1)"><use href="#py" width="24" height="24"/></g><path d="M17 17.500l5 2.200-5 2.500" fill="none" stroke="#444" stroke-width="1.300"/></symbol>
<symbol id="voronoi" viewBox="0 0 24 24"><rect x="1" y="3.300" width="22.500" height="18.300" rx=".8" fill="#fff" stroke="#222" stroke-width="1.200"/><path d="M1 12.500l7-2.500 4-7M8 10l3.500 4-1.700 7.500M8 10l-2-6.700M9 8l8 3 6.500-3M17 11l2.500-7.500M11.500 14l4-2 8 0M11.500 14l5 2.500 7-1M16.500 16.500l4 5" fill="none" stroke="#222" stroke-width="1.100"/></symbol>
<symbol id="stack" viewBox="0 0 24 24"><g stroke="#111" stroke-width="1.700" stroke-linejoin="round"><path d="M5.800 20.300l3-5.800c5 1 10-1.500 14-1.500-.5 3-2 5.500-4 6.500s-4 .8-6.500 .5-4 .3-6.500 .3z" fill="#23e023"/><path d="M4.400 14.300l3.200-6c6 1 10-1.300 15.400-1.500l-3.500 7c-5 1-10 .3-15.100.5z" fill="#f8f020"/><path d="M4.700 9.300l4-5.900h12.300l-2.500 5.600c-5 .5-9 0-13.800.3z" fill="#1cb8d8"/></g><path d="M15.600 0v5.500M14.800 9v3M14.200 20.500v3.300" stroke="#f00" stroke-width="1.900"/></symbol>
<symbol id="enmap" viewBox="0 0 24 24"><path d="M9.700 0c1 0 1.300.6 1.600 1.300L20.600 24C15.500 16.500 10 13.200 3.300 14z" fill="url(#gRain)"/></symbol>
<symbol id="redcross" viewBox="0 0 24 24"><path d="M9.500 0v5M9.500 11.500v8.500M.1 8.300h5.900M14 8.300h7.200" stroke="#f04848" stroke-width="1"/><g transform="rotate(-10 9.500 8)"><path d="M9.500 7.800l3 13.500 2.700-3 4.500 5.200 2.600-2.200-4.600-5.100 4-1.200z" fill="#fff" stroke="#444" stroke-width=".9"/></g></symbol>
<symbol id="gee" viewBox="0 0 24 24"><path d="M12 0v24M.5 12h23M4 3.500l16 17M20 3.500l-16 17" stroke="#818c90" stroke-width="4.500"/><circle cx="12" cy="12" r="9" fill="#818c90"/><circle cx="12" cy="12" r="8" fill="#3d78e8"/><path d="M6 8.500c3-3 7-3 9-1.500M5 13c3-1.500 5 2 13 2.500M7 17.500c3 0 4 1 6 1.500" fill="none" stroke="#fff" stroke-width="2"/><path d="M.3 9.500c2.500 5.500 6 5.500 8.200 2s5.500-3.500 7.500 1.500 5 8.500 7.700 1.500" fill="none" stroke="#b50d12" stroke-width="1.900"/></symbol>
<symbol id="gpin" viewBox="0 0 24 24"><path d="M5.500 8.300c0-4 3-7.200 6.500-7.200z" fill="#1a73e8"/><path d="M7 3.200C8.200 1.800 10 1 12 1c3 0 5.700 2 6.500 5l-6.500 6z" fill="#4285f4"/><path d="M7 3.200l5 4.300-5.500 6.300C4.700 10 5 6 7 3.200z" fill="#ea4335"/><path d="M12 7.500l3 2.500-6.300 7c-1-1.500-1.800-2.700-2.200-3.500z" fill="#fbbc04"/><path d="M18.500 6c1.200 7-4 9-6.500 16.500-.7-2-1.700-4-3.300-5.700z" fill="#34a853"/><circle cx="12" cy="8.200" r="2.500" fill="#fff"/></symbol>
<symbol id="wave" viewBox="0 0 24 24"><path d="M.5 9c2 4.500 5 5.500 8 1.500s5-1 6.200 2.500 3 6.500 5 3 2.500-3.500 3.300-6" fill="none" stroke="#000" stroke-width="1.700"/><g fill="#ff5a1f"><circle cx="2.500" cy="7" r="1"/><circle cx="4" cy="10" r="1"/><circle cx="7.300" cy="14.500" r="1"/><circle cx="11" cy="4.500" r="1"/><circle cx="12" cy="10.500" r="1"/><circle cx="14.500" cy="7" r="1"/><circle cx="16" cy="17.500" r="1"/><circle cx="18" cy="13" r="1"/><circle cx="19.500" cy="19.500" r="1"/><circle cx="22.800" cy="9.500" r="1"/><circle cx="22" cy="15" r="1"/></g></symbol>
<symbol id="lay3" viewBox="0 0 24 24"><path d="M12 11l10.700 6.400L12 24 1.300 17.400z" fill="#6eb748"/><path d="M12 6.500l10.700 6.200L12 19.200 1.300 12.700z" fill="#ee5d5d"/><path d="M12 .3l10.700 6.400L12 13.600 1.300 6.700z" fill="#64a2dc"/></symbol>
<symbol id="sat" viewBox="0 0 24 24"><g stroke="#777" stroke-width=".6" fill="#a9c8ea"><path d="M.8 6.500l8 4.500-1.500 3.300-7-5z"/><path d="M15 14l8.300 3.500-1.500 3.800-7.500-4.500z"/><path d="M10.500 3.500c3 1.500 6 2 9.500 3.800-1.500 3.500-8.500 1.500-9.500-3.800z"/></g><path d="M3 7.500l-1 3M5.300 9l-1 3M17.500 15l-1 3.500M20 16l-1 3.500" stroke="#333" stroke-width=".6"/><path d="M10.500 9.500l5 3-1.500 5.500-4 1.500-2-4z" fill="#fff" stroke="#888" stroke-width=".7"/><path d="M16 3.500L17.500 1" stroke="#555" stroke-width="1"/><circle cx="12" cy="13.500" r="1" fill="#6d97c4"/></symbol>
<symbol id="timegrid" viewBox="0 0 24 24"><g transform="translate(2.800 0)"><path d="M0 3h19.500v19.500H0z" fill="#b2cbe8"/><path d="M0 3h6v6H0zM13 3h6.500v6H13zM6 9h7v7H6zM0 16h6v6.500H0z" fill="#26384d"/><circle cx="12.300" cy="15.700" r="7.900" fill="#fff" stroke="#333" stroke-width="1.100"/><path d="M12 10.200v5.600l3.500 3.200" fill="none" stroke="#333" stroke-width="1"/></g></symbol>
<symbol id="help" viewBox="0 0 24 24"><rect x="2" y="1.400" width="20" height="21" fill="#6d97c4" stroke="#222" stroke-width="1"/><path d="M2 1.400h5v21H2z" fill="#27384d"/><text x="10" y="17.500" font-family="Liberation Serif" font-size="17" fill="#fff">?</text></symbol>

<symbol id="osm" viewBox="0 0 24 24"><path d="M0 0h24v24H0z" fill="url(#gOsm)"/><path d="M0 0h24v3L4 24H0z" fill="#fff" opacity=".12"/><circle cx="14.200" cy="9.700" r="7" fill="none" stroke="#fff" stroke-width="1.700"/><path d="M9 15l-6 6" stroke="#eef4ff" stroke-width="2.700" stroke-linecap="round"/></symbol>
<symbol id="paintmap" viewBox="0 0 24 24"><path d="M0 0h21v24H0z" fill="#f9cf3f"/><path d="M0 0h7v4H0z" fill="#b23"/><path d="M0 4l6-3 2 4-8 1z" fill="#3a4"/><path d="M0 9h3v6H0zM4 12h3v4H4z" fill="#a03560"/><path d="M10 0c3 5-1 8 2 11s7 3 8 13M0 21c5-3 7 1 9 3" fill="none" stroke="#3b70d8" stroke-width="2.500"/><path d="M1 19.500l6-2.500 6-4" fill="none" stroke="#444" stroke-width="1.500"/><path d="M12.500 13L22 1.500" stroke="#7c3410" stroke-width="3.500" stroke-linecap="round"/></symbol>
<symbol id="brain" viewBox="0 0 24 24"><g transform="translate(1.200 0)"><path d="M0 0h21v24H0z" fill="#fff"/><path d="M3 4.500l4 1 2 3M3 12h8M3 19.500l4-1 2-3" fill="none" stroke="#333" stroke-width=".9"/><circle cx="2.200" cy="4.500" r="1.700" fill="#d22" stroke="#222" stroke-width=".6"/><circle cx="2.200" cy="12" r="1.700" fill="#fb6" stroke="#222" stroke-width=".6"/><circle cx="2.200" cy="19.500" r="1.700" fill="#183" stroke="#222" stroke-width=".6"/><path d="M12 1c4-2 6 2 6 5 3 0 3 4 2 5 2 3 1 6-2 7 0 4-3 6-5 5-2-2-2-6-2-9s-2-10 1-13z" fill="#fbe7a0" stroke="#222" stroke-width=".8"/><path d="M12.500 1.500c3-1 4 2 4 5-2 1-4 0-4.500-1z" fill="#e5492b"/><path d="M13 9c3-1 5 1 6 1s0 2-2 2-3-1-4-1zM11.500 14c2 1 3 2 5 2-1 2-3 2-5 1z" fill="#3fae4a"/></g></symbol>
<symbol id="penta" viewBox="0 0 24 24"><path d="M9.500.3L23.500 4.500V19L9 23.800.5 12.500z" fill="#1f9a4a"/><path d="M10.500 3.800l9.800 3v10.200L10.300 20.300 4 12.300z" fill="#8ccf5b"/><path d="M11.300 7l6 2v6.200l-6 2-4-5z" fill="#d7ef8b"/><path d="M12 9.300l3.300 1.200v3.500L12 15l-2-3z" fill="#e79bc9"/></symbol>

<symbol id="addsel" viewBox="0 0 24 24"><rect x="-2" y="2" width="19" height="17" fill="#f6f6f2" stroke="#77776f" stroke-width="1.500"/><rect x="13.500" y="14.500" width="8.500" height="9" rx="2.500" fill="#dfeedd" stroke="#5a9260" stroke-width="2"/></symbol>
<symbol id="funnel" viewBox="0 0 24 24"><path d="M1 1h22v2.500l-8 9V24l-5-2V12.500L1 3.500z" fill="#6d97c4" stroke="#4d729f" stroke-width=".8"/><path d="M1.300 1.300h21.400v3.300H1.300z" fill="#f6e04b" stroke="#a99a3d" stroke-width=".7"/></symbol>
<symbol id="collapse" viewBox="0 0 24 24"><path d="M1 3.500h21M3 3.500v18M3 10.500h5M3 19h5" fill="none" stroke="#8a8a8a" stroke-width="1.500"/><path d="M6.500 8h4.500v5H6.500zM6.500 17h4.500v5H6.500z" fill="#fff0c8" stroke="#f08c1a" stroke-width="1.600"/><path d="M16.500.7l7 8.300h-3.800v12.500h-6.200V9H9.500z" fill="#6d97c4" stroke="#3a5b86" stroke-width="1"/></symbol>
<symbol id="expand" viewBox="0 0 24 24"><path d="M1 3.500h21M3 3.500v18M3 10.500h5M3 19h5" fill="none" stroke="#8a8a8a" stroke-width="1.500"/><path d="M6.500 8h4.500v5H6.500zM6.500 17h4.500v5H6.500z" fill="#fff0c8" stroke="#f08c1a" stroke-width="1.600"/><path d="M16.500 22.700l7-8h-3.800V1.500h-6.200v13.200H9.500z" fill="#6d97c4" stroke="#3a5b86" stroke-width="1"/></symbol>
<symbol id="info" viewBox="0 0 24 24"><circle cx="12" cy="12" r="10.500" fill="#6593c9" stroke="#4e78aa" stroke-width=".7"/><text x="8.700" y="18.800" font-family="Liberation Serif" font-style="italic" font-weight="bold" font-size="19" fill="#fff">i</text></symbol>
<symbol id="brush" viewBox="0 0 24 24"><path d="M-2 11l8-3 8 9-6 5-9-1z" fill="#e84545"/><path d="M2 6l6 2 6 9-5 5z" fill="#f7c93f"/><path d="M8 11l5-2 5 5-4 7c-5 0-6-5-6-10z" fill="#e5a84b" stroke="#a9722a" stroke-width=".6"/><path d="M14.500 11.500L22.500 3" stroke="#c48a3c" stroke-width="3"/></symbol>
<symbol id="addgroup" viewBox="0 0 24 24"><path d="M1 9v13.500h13M4.500 6v13.500h13" fill="none" stroke="#777" stroke-width="1.300"/><rect x="8" y="3.500" width="12" height="13" fill="#eee" stroke="#777" stroke-width="1.300"/><path d="M10 16V3c0-3 4.500-3 4.500 0v12" fill="none" stroke="#46678d" stroke-width="1.400"/><rect x="13.500" y="14.500" width="9" height="9" rx="2" fill="#4f8b54"/><path d="M18 16.200v5.600M15.200 19H20.800" stroke="#fff" stroke-width="1.700"/></symbol>
<symbol id="eyedd" viewBox="0 0 24 24"><path d="M0 12c5-8 18-8 23 1" fill="none" stroke="#999" stroke-width="1.300"/><path d="M1 13.500c5-6 16-6 21 0-5 6-16 6-21 0z" fill="#fff" stroke="#999" stroke-width="1"/><circle cx="11.500" cy="12.500" r="5" fill="#5f86b4"/><circle cx="11.500" cy="12" r="2.300" fill="#1d2f45"/><path d="M17.500 20.500h8l-4 4.500z" fill="#444"/></symbol>
<symbol id="funneldd" viewBox="0 0 24 24"><use href="#funnel" x="-1"/><path d="M17.500 20.500h8l-4 4.500z" fill="#444"/></symbol>
<symbol id="expr" viewBox="0 0 24 24"><text x="0" y="16" font-family="Liberation Serif" font-size="28" fill="#555">ε</text><path d="M12 12.500h11l-1.500 11h-8z" fill="#ddd" stroke="#aaa" stroke-width="1"/></symbol>
<symbol id="remove" viewBox="0 0 24 24"><rect x="1.500" y="1.500" width="17" height="18.500" fill="#f2f2f0" stroke="#8a8a84" stroke-width="1.300"/><rect x="12.800" y="15.500" width="9.500" height="7.500" rx="1.800" fill="#ea2f3a"/><path d="M14.600 19.200h6" stroke="#fff" stroke-width="1.800"/></symbol>
<symbol id="gearsdd" viewBox="0 0 24 24"><g fill="none"><circle cx="7.500" cy="7.500" r="5.500" stroke="#d32027" stroke-width="3" stroke-dasharray="2.300 2.020"/><circle cx="7.500" cy="7.500" r="3" stroke="#d32027" stroke-width="3.600"/><circle cx="18" cy="12.500" r="4" stroke="#777" stroke-width="3" stroke-dasharray="1.800 1.340"/><circle cx="18" cy="12.500" r="2.800" stroke="#777" stroke-width="2"/><circle cx="11" cy="20" r="3" stroke="#8fb0e0" stroke-width="3.500"/></g><path d="M17.500 20.500h8l-4 4.500z" fill="#444"/></symbol>
<symbol id="pydd" viewBox="0 0 24 24"><use href="#py" x="-1"/><path d="M17.500 20.500h8l-4 4.500z" fill="#444"/></symbol>
<symbol id="log" viewBox="0 0 24 24"><path d="M4 1h12l5 5v17H4z" fill="#fafafa" stroke="#999" stroke-width="1.200"/><path d="M6.500 7.500h6M6.500 11h12M6.500 14.500h8M6.500 18h12M15.500 1v5.500h5.500" fill="none" stroke="#888" stroke-width="1.300"/></symbol>
<symbol id="editmodel" viewBox="0 0 24 24"><rect x="3" y="2.500" width="14" height="14" fill="#b7ac86"/><path d="M12 18L20 7l3 2-8 12-4 2.500z" fill="#cfcab6" stroke="#a9a38c" stroke-width=".7"/></symbol>
<symbol id="search" viewBox="0 0 24 24"><ellipse cx="9.700" cy="9.700" rx="8.200" ry="8.700" fill="none" stroke="#8b8b8b" stroke-width="1.700"/><path d="M15.500 16.200L22 23" stroke="#8b8b8b" stroke-width="2.300" stroke-linecap="round"/></symbol>

<symbol id="star" viewBox="0 0 24 24"><path d="M12 .8l3.200 8.400 8 .4-6.300 5.600 2.700 8L12 18.600 4.400 23.200l2.700-8L.8 9.600l8-.4z" fill="#ffff70" stroke="#d8ae13" stroke-width="1.100"/></symbol>
<symbol id="folder" viewBox="0 0 24 24"><path d="M1.700 3h10l2 3h8.600v15.300H1.700z" fill="#f0f0f0" stroke="#86867f" stroke-width="1.200"/></symbol>
<symbol id="home" viewBox="0 0 24 24"><use href="#folder"/><path d="M12 8l5.500 6H15.800v4.700H8.200V14H6.500z" fill="#fff" stroke="#333" stroke-width="1.200"/></symbol>
<symbol id="pg" viewBox="0 0 24 24"><path d="M4 1c3-1.500 5-.5 7 0 4-1.500 12-1.300 12.200 3 .2 4-1.200 8-3 10.500 1 .5 2.500 0 3.300.3-.5 1.700-3.500 2.200-5 2 0 4-1 6.200-3.700 6.200-3 0-3.800-2-3.800-6.500-1 .5-3.500 1.300-5.500-1.500C2.500 11 .5 8 .7 5 .8 3 2 1.500 4 1z" fill="#5f8fc5" stroke="#36536f" stroke-width=".9"/><path d="M11 17c-.5-3-2.800-3.500-2.300-6.500C9 6 8 5 10.500 2M15.500 2.200c4 3 3.500 9 1.700 12.800M8.500 8c1.500-1.200 3-.5 3 1.500s.5 3-.5 4.500M16 8.500c1-.8 2.500-.5 2.300.7" fill="none" stroke="#36536f" stroke-width=".9"/></symbol>
<symbol id="hana" viewBox="0 0 24 24"><rect x="4" y="4.500" width="16" height="15.500" fill="#6d97c4"/><path d="M5 1.200h15M5 22.800h15" stroke="#33506f" stroke-width="1.700" stroke-dasharray="2 2.300"/><path d="M1.200 5v16M22.800 5v16" stroke="#33506f" stroke-width="1.700" stroke-dasharray="2 2.300"/></symbol>
<symbol id="mssql" viewBox="0 0 24 24"><path d="M1 .9c8 .5 14 2 18 5 2.500 2 4 4 4.300 5.500C14 13.900 6 17.400 1 21.900c3.500-6 5-14 0-21z" fill="#5f8fc5" stroke="#36536f" stroke-width=".9"/><path d="M7 1.900c2.500 5 2.500 10 0 15M12 2.900c2.500 4 2.500 8 .5 12M17 4.900c2 3 2 5.500 1 8" fill="none" stroke="#36536f" stroke-width=".8"/></symbol>
<symbol id="oracle" viewBox="0 0 24 24"><rect x="1.200" y="3.900" width="21.600" height="15.800" rx="5" fill="#6d97c4" stroke="#3f5e80" stroke-width="1.700"/></symbol>
<symbol id="wms" viewBox="0 0 24 24"><circle cx="12" cy="12" r="11" fill="#c3d6ec" stroke="#6590c0" stroke-width="1.100"/><path d="M3.500 6.500c1-2 3-3 4.500-2.500l2 1-1 2 1 1.500-2.500 3-1.500 1-1-2.500zM12.500 4.500l3-1 4 2 1.500 4-2 1-1-2-2 1.500-1.500-2-2 0zM11 10.500l3-.5 1.500 3-1.500 2-1 4-1.500-1v-4l-1.500-1.500zM6 15l2 1.500-.5 3.500-1.500-2z" fill="#35547c"/></symbol>
<symbol id="vt" viewBox="0 0 24 24"><rect x="2.200" y="1.500" width="19.600" height="21" fill="#e6edf6" stroke="#26384d" stroke-width="1.200"/><path d="M2 16h20v6.500H2z" fill="#a9c5e8"/><path d="M2 10h20v6H2z" fill="#cfdff2"/><path d="M8.700 1.500v21M15.300 1.500v21M2 8.500h20M2 15.500h20M2.200 1.500h19.600v21H2.200z" fill="none" stroke="#26384d" stroke-width="1.500"/></symbol>
<symbol id="xyz" viewBox="0 0 24 24"><path d="M2 1.500h5.700v5.500H2zM9.200 1.500h5.700v5.500H9.200zM16.400 1.500h5.700v5.500h-5.700zM2 9.300h5.700v5.500H2zM9.200 9.300h5.700v5.500H9.200zM16.400 9.300h5.700v5.500h-5.700zM2 17.200h5.700v5.500H2zM9.200 17.200h5.700v5.500H9.200zM16.400 17.200h5.700v5.500h-5.700z" fill="#6d97c4"/></symbol>
<symbol id="q" viewBox="0 0 24 24"><ellipse cx="12" cy="11.800" rx="8.500" ry="7.900" fill="none" stroke="url(#gQ)" stroke-width="4.200"/><path d="M13.800 15.700L17 12.900l5.700 5.700v3.300H19.200z" fill="#fff" stroke="#fff" stroke-width="1.800"/><path d="M15.500 19.500l3.500 3.500h-3z" fill="#fff"/><path d="M9.900 9.800h3.700l2.300 2.200-3 2.700-3-2.200z" fill="#ee7f22"/><path d="M12.700 14.500l3.100-2.600 1.300 1.100-3.200 2.800z" fill="#f6e04a"/><path d="M13.800 15.700L17 12.900l5.700 5.700v3.300H19.200z" fill="#5f9e3c"/></symbol>
<symbol id="gdal" viewBox="0 0 24 24"><circle cx="13.800" cy="10" r="8.900" fill="#6ec3ea"/><path d="M9 4c3-2.500 7-2 8 0s-2 4-3 6-4 0-5-2-1-3 0-4z" fill="#4b8f4b"/><path d="M8 10V5l7 1.500" fill="none" stroke="#b44a3a" stroke-width="1.200"/><path d="M16 13l4 0-1 5-3-2z" fill="#3e8748"/><path d="M0 3.500L4.500.5 8-.5 8 2 4 2.500 1 5z" fill="#555"/><text x="-.2" y="19.500" font-family="Open Sans" font-weight="bold" font-size="12.500" textLength="22.500" lengthAdjust="spacingAndGlyphs" fill="#000">GDAL</text></symbol>
<symbol id="grass" viewBox="0 0 24 24"><path d="M3.500 21.800h17" stroke="#999" stroke-width="1.700"/><path d="M3 12.500l9 10.300 9-10.300" fill="none" stroke="#000" stroke-width="1.500"/><path d="M12 .8l9 9.600-9 9.800-9-9.800z" fill="#fff" stroke="#666" stroke-width=".9"/><path d="M12 18.500c0-5-.5-10 0-15.500.8 5 .6 9 0 15.500zM12 18.500c1-4 2.500-7 4.500-9.500-1 4-2.500 7-4.500 9.500z" fill="#1e9c1e"/><path d="M12 17.500c-1-4-2-6-4.500-8.500M12 17.500c-1-2.500-3-4.500-5-5.500M12 16.500c1-2 2-3 4-4M10.500 15L9 8" fill="none" stroke="#3aa63a" stroke-width=".6"/></symbol>
<symbol id="pcr" viewBox="0 0 24 24"><path d="M0 4h24v16H0z" fill="#f3f7fd"/><path d="M0 4.500h24M0 19.500h24" stroke="#5b82b8" stroke-width="1"/><text x=".3" y="16.900" font-family="Open Sans" font-size="13.500" textLength="22.800" lengthAdjust="spacingAndGlyphs" fill="#4a74ae">PCR</text></symbol>
<symbol id="saga" viewBox="0 0 24 24"><path d="M18.500 4.300C13 .2 5.500 1.500 2.700 7.500S3 20.500 9 22.200 21.300 19 21.700 13.200H11.500" fill="none" stroke="#0e4f94" stroke-width="2.100"/><path d="M14 5.300h5.600V.8z" fill="#0e4f94" stroke="#0e4f94" stroke-width=".9"/><path d="M2.500 9L13.200 22M6.300 10.500l4.800-4.300 6.600 7" fill="none" stroke="#0e4f94" stroke-width="2"/></symbol>
<symbol id="float" viewBox="0 0 24 24"><rect x="1" y="1" width="22" height="22" rx="4.500" fill="#f4f4f4" stroke="#6e6e69" stroke-width="1.700"/><rect x="10" y="5.500" width="8.500" height="8.500" rx="1" fill="none" stroke="#6e6e69" stroke-width="1.500"/><rect x="5.500" y="10" width="8.500" height="8.500" rx="1" fill="#f4f4f4" stroke="#6e6e69" stroke-width="1.500"/></symbol>
<symbol id="close" viewBox="0 0 24 24"><rect x="1" y="1" width="22" height="22" rx="4.500" fill="#f4f4f4" stroke="#6e6e69" stroke-width="1.700"/><path d="M6.500 6.500l11 11M17.500 6.500l-11 11" stroke="#62625d" stroke-width="3.700"/></symbol>
</defs>
</svg>

<div class="app">
<nav class="menubar">
<span><b data-w="85">Pro<u>j</u>ect</b></span><span><b data-w="46"><u>E</u>dit</b></span><span><b data-w="58"><u>V</u>iew</b></span><span><b data-w="66"><u>L</u>ayer</b></span><span><b data-w="98"><u>S</u>ettings</b></span><span><b data-w="91"><u>P</u>lugins</b></span><span><b data-w="76">Vect<u>o</u>r</b></span><span><b data-w="74"><u>R</u>aster</b></span><span><b data-w="112"><u>D</u>atabase</b></span><span><b data-w="56"><u>W</u>eb</b></span><span><b data-w="67"><u>M</u>esh</b></span><span><b data-w="132">Pro<u>c</u>essing</b></span><span><b data-w="59"><u>H</u>elp</b></span>
</nav>

<div class="bar">
<i class="btn"><svg><use href="#new"/></svg></i><i class="btn"><svg><use href="#open"/></svg></i><i class="btn"><svg><use href="#save"/></svg></i><i class="btn"><svg><use href="#layout"/></svg></i><i class="btn"><svg><use href="#layoutmgr"/></svg></i><i class="btn"><svg><use href="#style"/></svg></i>
<i class="grip"></i>
<i class="btn on"><svg><use href="#hand"/></svg></i><i class="btn off"><svg><use href="#pansel"/></svg></i><i class="btn"><svg><use href="#zin"/></svg></i><i class="btn"><svg><use href="#zout"/></svg></i><i class="btn"><svg><use href="#zfull"/></svg></i><i class="btn off"><svg><use href="#zsel"/></svg></i><i class="btn off"><svg><use href="#zlay"/></svg></i><i class="btn off"><svg><use href="#z11"/></svg></i><i class="btn"><svg><use href="#zlast"/></svg></i><i class="btn off"><svg><use href="#znext"/></svg></i><i class="btn"><svg><use href="#mapnew"/></svg></i><i class="btn"><svg><use href="#map3d"/></svg></i><i class="btn"><svg><use href="#bmnew"/></svg></i><i class="btn"><svg><use href="#book"/></svg></i><i class="btn"><svg><use href="#clock"/></svg></i><i class="btn"><svg><use href="#refresh"/></svg></i>
<i class="grip"></i>
<i class="btn off"><svg><use href="#selrect"/></svg></i><i class="drop off"></i><i class="btn off"><svg><use href="#selform"/></svg></i><i class="drop off"></i><i class="btn"><svg><use href="#desel"/></svg></i><i class="drop"></i><i class="btn"><svg><use href="#selloc"/></svg></i>
<i class="grip"></i>
<i class="btn"><svg><use href="#ident"/></svg></i><i class="btn off"><svg><use href="#abacus"/></svg></i><i class="btn on"><svg><use href="#gear"/></svg></i><i class="btn"><svg><use href="#sigma"/></svg></i><i class="btn off"><svg><use href="#table"/></svg></i><i class="drop off"></i><i class="btn"><svg><use href="#ruler"/></svg></i><i class="drop"></i><i class="btn"><svg><use href="#tip"/></svg></i><i class="btn off"><svg><use href="#action"/></svg></i><i class="drop off"></i>
</div>

<div class="bar">
<i class="btn"><svg><use href="#dsm"/></svg></i><i class="btn"><svg><use href="#gpkgnew"/></svg></i><i class="btn"><svg><use href="#shpnew"/></svg></i><i class="btn"><svg><use href="#feathernew"/></svg></i><i class="btn"><svg><use href="#chip"/></svg></i><i class="btn"><svg><use href="#meshnew"/></svg></i><i class="btn"><svg><use href="#vecnew"/></svg></i>
<i class="grip"></i>
<i class="btn off menu"><svg><use href="#pens"/></svg></i><i class="btn off"><svg><use href="#pen"/></svg></i><i class="btn off"><svg><use href="#saveedit"/></svg></i><i class="btn off"><svg><use href="#digline"/></svg></i><i class="drop off"></i><i class="btn off"><svg><use href="#points"/></svg></i><i class="btn off"><svg><use href="#vertex"/></svg></i><i class="drop off"></i><i class="btn off"><svg><use href="#attrs"/></svg></i><i class="btn off"><svg><use href="#trash"/></svg></i><i class="btn off"><svg><use href="#cut"/></svg></i><i class="btn off"><svg><use href="#copy"/></svg></i><i class="btn off"><svg><use href="#paste"/></svg></i><i class="btn off"><svg><use href="#undo"/></svg></i><i class="btn off"><svg><use href="#redo"/></svg></i>
<i class="grip"></i>
<i class="btn off"><svg><use href="#tag"/></svg></i><i class="btn off"><svg><use href="#chart"/></svg></i><i class="rule"></i><i class="btn"><svg><use href="#tagpin"/></svg></i><i class="btn"><svg><use href="#tagred"/></svg></i><i class="rule"></i><i class="btn off"><svg><use href="#tagpinoff"/></svg></i><i class="btn off"><svg><use href="#tageye"/></svg></i><i class="btn off"><svg><use href="#tagmove"/></svg></i><i class="btn off"><svg><use href="#tagrot"/></svg></i><i class="btn off"><svg><use href="#tagedit"/></svg></i>
<i class="grip"></i>
<i class="btn"><svg><use href="#globeadd"/></svg></i><i class="btn"><svg><use href="#globesearch"/></svg></i><i class="btn"><svg><use href="#globebin"/></svg></i>
<i class="grip"></i>
<i class="btn"><svg><use href="#pycon"/></svg></i><i class="btn"><svg><use href="#voronoi"/></svg></i><i class="btn"><svg><use href="#stack"/></svg></i><i class="btn"><svg><use href="#enmap"/></svg></i><i class="btn"><svg><use href="#redcross"/></svg></i><i class="btn"><svg><use href="#gee"/></svg></i><i class="btn"><svg><use href="#gpin"/></svg></i><i class="btn"><svg><use href="#wave"/></svg></i><i class="btn"><svg><use href="#lay3"/></svg></i><i class="btn"><svg><use href="#sat"/></svg></i><i class="btn"><svg><use href="#timegrid"/></svg></i>
<i class="grip"></i>
<i class="btn"><svg><use href="#help"/></svg></i>
<i class="grip"></i>
</div>

<div class="bar last">
<i class="btn"><svg><use href="#osm"/></svg></i><i class="btn"><svg><use href="#paintmap"/></svg></i><i class="grip"></i><i class="btn"><svg><use href="#brain"/></svg></i><i class="grip"></i><i class="btn"><svg><use href="#penta"/></svg></i>
</div>

<main class="main">
<aside class="left">
<header class="title"><b data-w="82">rowser</b><svg><use href="#float"/></svg><svg><use href="#close"/></svg></header>
<div class="tools"><i><svg><use href="#addsel"/></svg></i><i><svg><use href="#refresh"/></svg></i><i><svg><use href="#funnel"/></svg></i><i><svg><use href="#collapse"/></svg></i><i><svg><use href="#info"/></svg></i></div>
<div class="box browser">
<ul class="tree">
<li><svg><use href="#star"/></svg><b data-w="109">Favorites</b></li>
<li class="tw"><svg><use href="#book"/></svg><b data-w="225">Spatial Bookmarks</b></li>
<li class="tw"><svg><use href="#home"/></svg><b data-w="78">Home</b></li>
<li class="tw"><svg><use href="#folder"/></svg><b data-w="195">C:\ (WINDOWS)</b></li>
<li class="tw"><svg><use href="#folder"/></svg><b data-w="128">D:\ (DATA)</b></li>
<li class="tw"><svg><use href="#folder"/></svg><b data-w="174">E:\ (NETRA(E))</b></li>
<li><svg><use href="#gpkg"/></svg><b data-w="152">GeoPackage</b></li>
<li><svg><use href="#feather"/></svg><b data-w="119">SpatiaLite</b></li>
<li><svg><use href="#pg"/></svg><b data-w="141">PostgreSQL</b></li>
<li><svg><use href="#hana"/></svg><b data-w="135">SAP HANA</b></li>
<li><svg><use href="#mssql"/></svg><b data-w="177">MS SQL Server</b></li>
<li><svg><use href="#oracle"/></svg><b data-w="80">Oracle</b></li>
<li><svg><use href="#wms"/></svg><b data-w="156">WMS/WMTS</b></li>
<li><svg><use href="#vt"/></svg><b data-w="137">Vector Tiles</b></li>
<li class="tw down"><svg><use href="#xyz"/></svg><b data-w="109">XYZ Tiles</b></li>
</ul>
<div class="scroll"><i class="up"></i><i class="thumb"></i><i class="trough"></i><i class="dn"></i></div>
</div>
<div class="split"></div>
<header class="title"><b data-w="61">ayers</b><svg><use href="#float"/></svg><svg><use href="#close"/></svg></header>
<div class="tools"><i><svg><use href="#brush"/></svg></i><i><svg><use href="#addgroup"/></svg></i><i><svg><use href="#eyedd"/></svg></i><i><svg><use href="#funneldd"/></svg></i><i class="off"><svg><use href="#expr"/></svg></i><i class="drop off"></i><i><svg><use href="#expand"/></svg></i><i><svg><use href="#collapse"/></svg></i><i><svg><use href="#remove"/></svg></i></div>
<div class="box layers"></div>
</aside>
<i class="vsplit"></i>
<section class="canvas"></section>
<i class="vsplit r"></i>
<aside class="right">
<header class="title"><b data-w="236">Processing Toolbox</b></header>
<div class="tools"><i><svg><use href="#gearsdd"/></svg></i><i><svg><use href="#pydd"/></svg></i><i><svg><use href="#clock2"/></svg></i><i><svg><use href="#log"/></svg></i><i class="rule"></i><i class="off"><svg><use href="#editmodel"/></svg></i><i class="rule"></i><i><svg><use href="#wrenchShape"/></svg></i></div>
<div class="search"><svg><use href="#search"/></svg><b data-w="99">Search…</b></div>
<ul class="tree toolbox">
<li><svg><use href="#clock2"/></svg><b data-w="168">Recently used</b></li>
<li><svg><use href="#q"/></svg><b data-w="153">Cartography</b></li>
<li><svg><use href="#q"/></svg><b data-w="112">Database</b></li>
<li><svg><use href="#q"/></svg><b data-w="109">File tools</b></li>
<li><svg><use href="#q"/></svg><b data-w="50">GPS</b></li>
<li><svg><use href="#q"/></svg><b data-w="157">Interpolation</b></li>
<li><svg><use href="#q"/></svg><b data-w="132">Layer tools</b></li>
<li><svg><use href="#q"/></svg><b data-w="68">Mesh</b></li>
<li><svg><use href="#q"/></svg><b data-w="206">Network analysis</b></li>
<li><svg><use href="#q"/></svg><b data-w="61">Plots</b></li>
<li><svg><use href="#q"/></svg><b data-w="177">Raster analysis</b></li>
<li><svg><use href="#q"/></svg><b data-w="181">Raster creation</b></li>
<li><svg><use href="#q"/></svg><b data-w="262">Raster terrain analysis</b></li>
<li><svg><use href="#q"/></svg><b data-w="142">Raster tools</b></li>
<li><svg><use href="#q"/></svg><b data-w="178">Vector analysis</b></li>
<li><svg><use href="#q"/></svg><b data-w="182">Vector creation</b></li>
<li><svg><use href="#q"/></svg><b data-w="174">Vector general</b></li>
<li><svg><use href="#q"/></svg><b data-w="201">Vector geometry</b></li>
<li><svg><use href="#q"/></svg><b data-w="173">Vector overlay</b></li>
<li><svg><use href="#q"/></svg><b data-w="192">Vector selection</b></li>
<li><svg><use href="#q"/></svg><b data-w="144">Vector table</b></li>
<li><svg><use href="#q"/></svg><b data-w="131">Vector tiles</b></li>
<li><svg><use href="#enmap"/></svg><b data-w="147">EnMAP-Box</b></li>
<li><svg><use href="#gdal"/></svg><b data-w="69">GDAL</b></li>
<li><svg><use href="#grass"/></svg><b data-w="82">GRASS</b></li>
<li><svg><use href="#pcr"/></svg><b data-w="110">PCRaster</b></li>
<li><svg><use href="#osm"/></svg><b data-w="133">QuickOSM</b></li>
<li><svg><use href="#saga"/></svg><b data-w="70">SAGA</b></li>
</ul>
</aside>
</main>
<div class="mark mark-bar"></div>
<div class="mark mark-tree"></div>
</div>
<script src="fit.js"></script>
</body>
</html>
```
FILE: styles.css
```css
* { box-sizing: border-box; }
html, body { margin: 0; height: 100%; overflow: hidden; }
body { background: #f0f0f0; color: #000; font: 28px/1.362 "Open Sans", "Noto Sans", sans-serif; }
b { font-weight: 400; white-space: nowrap; display: inline-block; }
i { font-style: normal; flex: none; }
svg { display: block; overflow: visible; flex: none; }
symbol { overflow: visible; }
.defs { position: absolute; }
.app { position: relative; display: flex; flex-direction: column; width: 3927px; height: 2475px; overflow: hidden; }

.menubar { display: grid; grid-template-columns: 124px 86px 97px 104px 137px 130px 116px 113px 150px 96px 106px 171px auto; align-items: center; height: 46px; padding: 0 0 0 4px; border-bottom: 2px solid #d9d9d9; background: #efefef; flex: none; }
.menubar u { text-decoration-thickness: 2px; text-underline-offset: 3px; text-decoration-skip-ink: none; }

.bar { display: flex; align-items: center; height: 99.5px; padding: 1.5px 0 0 8px; border-bottom: 3px solid #bdbdbd; background: linear-gradient(#fbfbfb, #eee); flex: none; }
.bar.last { height: 97px; padding-top: 4px; border-bottom-color: #c6c6c6; }
.btn { display: grid; place-items: center; width: 76.5px; height: 70px; position: relative; }
.btn svg { width: 56px; height: 56px; }
.btn.on { width: 73px; margin: 0 1.75px; border: 2px solid #b4b4b4; border-radius: 6px; background: #dcdcdc; }
.btn.off svg, .tools .off svg { opacity: .38; filter: grayscale(.65); }
.btn.menu::after { content: ""; position: absolute; right: 8px; bottom: 4px; border: 6px solid transparent; border-top: 8px solid #999; border-bottom: 0; }
.drop { width: 27.4px; display: grid; place-items: center start; }
.drop::after { content: ""; border: 9px solid transparent; border-top: 10px solid #4e4e4e; border-bottom: 0; margin-left: 2px; }
.drop.off::after { border-top-color: #a0a0a0; }
.grip { width: 45.8px; height: 40px; padding-left: 29px; }
.grip::after { content: ""; display: block; width: 11px; height: 40px; background: radial-gradient(circle at 1.5px 1.5px, #b5b5b5 1.4px, transparent 1.8px) 0 0 / 8px 7.3px; }
.rule { width: 16px; height: 44px; padding-left: 8px; }
.rule::after { content: ""; display: block; width: 2px; height: 100%; background: #ccc; }

.main { display: flex; flex: 1; min-height: 0; }
.left { display: flex; flex-direction: column; width: 794px; }
.title { display: flex; align-items: center; height: 54px; flex: none; }
.title b { margin-right: auto; }
.title svg { width: 26px; height: 26px; margin-right: 6px; }
.title svg:last-child { margin-right: 4px; }
.tools { display: flex; align-items: center; height: 74px; margin-bottom: 5px; flex: none; }
.tools > i { display: grid; place-items: center; width: 58.1px; }
.tools svg { width: 36px; height: 36px; }
.tools > .drop { width: 27px; place-items: center start; }
.tools > .rule { display: block; width: 17px; height: 28px; }
.tools .drop::after { border-width: 8px 8px 0; margin-left: 2px; }
.left .tools { margin-left: -13px; }

.box { border: 2px solid #b5b5b5; border-left: 0; background: #fff; }
.browser { display: flex; height: 904px; flex: none; overflow: hidden; }
.layers { flex: 1; border-bottom: 0; }
.tree { list-style: none; margin: 0; padding: 1px 0 0; flex: 1; }
.tree li { display: flex; align-items: center; height: 60.18px; padding-left: 31px; position: relative; }
.tree svg { width: 54px; height: 54px; margin-right: 15px; }
.tree .tw::before { content: ""; position: absolute; left: -5px; top: 22px; border: 7px solid transparent; border-left: 9px solid #555; border-right: 0; }
.tree .down::before { left: -9px; top: 25px; border: 9px solid transparent; border-top: 10px solid #555; border-bottom: 0; }
.scroll { display: flex; flex-direction: column; width: 32px; border-left: 2px solid #b5b5b5; }
.scroll i { display: grid; place-items: center; }
.up { height: 31px; border-bottom: 2px solid #b5b5b5; background: #fafafa; }
.up::after { content: ""; border: 9px solid transparent; border-bottom: 10px solid #555; border-top: 0; }
.thumb { height: 533px; border-bottom: 2px solid #b5b5b5; background: linear-gradient(90deg, #fcfcfc, #ececec); }
.trough { height: 305px; background: #e4e4e4; border-bottom: 2px solid #b5b5b5; }
.dn { flex: 1 !important; background: #fafafa; }
.dn::after { content: ""; border: 9px solid transparent; border-top: 10px solid #555; border-bottom: 0; }
.split { height: 19px; padding: 9px 0 0 368px; flex: none; }
.split::after { content: ""; display: block; width: 38px; height: 4px; background: radial-gradient(circle at 1.5px 1.5px, #aaa 1.3px, transparent 1.7px) 0 0 / 7px 4px; }
.vsplit { width: 22px; padding: 1089px 0 0 11px; }
.vsplit::after { content: ""; display: block; width: 4px; height: 38px; background: radial-gradient(circle at 1.5px 1.5px, #aaa 1.3px, transparent 1.7px) 0 0 / 4px 7px; }
.vsplit.r { width: 22px; padding-left: 11px; }
.canvas { width: 2203px; margin-top: 3px; border: 2px solid #b9b9b9; border-bottom: 0; background: #fff; }

.right { display: flex; flex-direction: column; flex: 1; min-width: 0; }
.right .title { padding-left: 8px; }
.right .tools { margin-left: 13px; }
.right .tools > i:not(.rule) { width: 57.5px; }
.search { display: flex; align-items: center; height: 68px; padding-left: 25px; border: 2px solid #b0b0b0; border-right: 0; border-bottom-width: 3px; border-radius: 5px 0 0 5px; background: #fff; color: #8b8b8b; flex: none; }
.search svg { width: 42px; height: 42px; margin-right: 18px; }
.search b { padding-top: 4px; }
.toolbox { padding: 1px 0 0; margin-top: 1px; border-left: 2px solid #b5b5b5; border-top: 2px solid #a8a8a8; background: #fff; }
.toolbox li { height: 60.2px; padding-left: 76px; }
.toolbox svg { width: 56px; height: 56px; margin-right: 13px; }
.toolbox li::before { content: ""; position: absolute; left: 29px; top: 21px; border: 9px solid transparent; border-left: 10px solid #4a4a4a; border-right: 0; }

.mark { position: absolute; border: 14px solid #000; }
.mark-bar { left: 2908px; top: 115px; width: 174px; height: 154px; }
.mark-tree { left: 3098px; top: 1833px; width: 314px; height: 112px; }
```
FILE: fit.js
```js
// Tracks each label so that it takes the width given in data-w.
document.querySelectorAll("b[data-w]").forEach(function (el) {
  var natural = el.getBoundingClientRect().width;
  el.style.letterSpacing = (el.dataset.w - natural) / el.textContent.length + "px";
});
```
